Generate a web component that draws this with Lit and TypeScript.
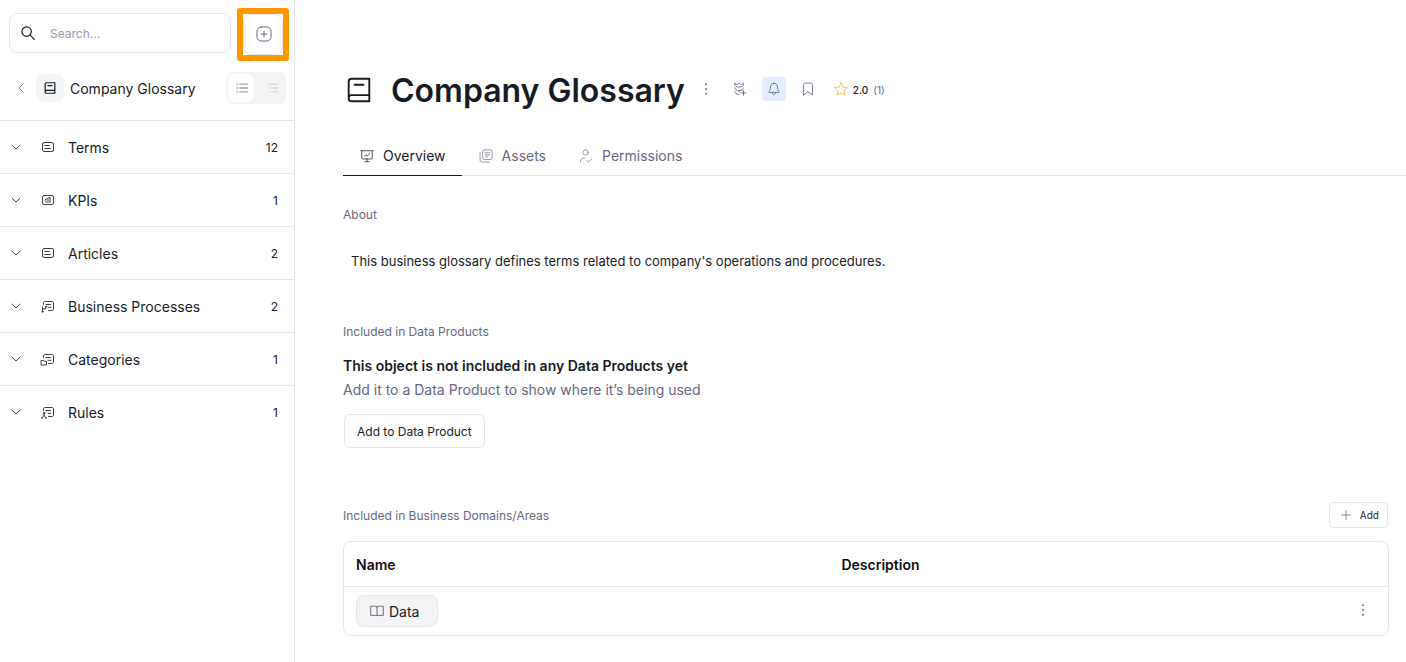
import { LitElement, html, css, svg, TemplateResult } from "lit";
import { customElement, property, state } from "lit/decorators.js";

const card = svg`<rect x="2.5" y="3.5" width="11" height="9" rx="1.5"/><path d="M4.8 6.5h4.4M4.8 9.500h5.600"/>`;
const linkedCard = svg`<path d="M3.500 6.500V5c0-1 .6-1.500 1.600-1.500h6.800c1 0 1.600.5 1.600 1.500v6c0 1-.6 1.500-1.600 1.500H8.500M6 6.500h4.500M8 9.300h2.800"/>`;

const icons: Record<string, TemplateResult> = {
  search: svg`<circle cx="6.600" cy="6.600" r="4.700"/><path d="M10.100 10.100l4.300 4.300"/>`,
  plusSquare: svg`<rect x="1" y="1" width="14" height="14" rx="4.200"/><path d="M8 5.200v5.600M5.200 8h5.600"/>`,
  plus: svg`<path d="M8 2v12M2 8h12"/>`,
  back: svg`<path d="M10 4L6 8l4 4"/>`,
  down: svg`<path d="M4 6.200L8 10l4-3.800"/>`,
  book: svg`<path d="M4 2h9.500v12H4c-.9 0-1.500-.6-1.500-1.500v-9C2.500 2.600 3.100 2 4 2zM2.500 12.200c0-.9.6-1.500 1.500-1.500h9.500M5.600 5.200h4.800"/>`,
  list: svg`<path d="M5.500 3.500h9M5.500 8h9M5.500 12.500h9M2 3.500h1M2 8h1M2 12.500h1"/>`,
  tree: svg`<path d="M5.500 3.500h9M9 8h5.500M9 12.500h5.500M2.500 3.500h.5M6 8h.5M6 12.500h.5"/>`,
  card,
  chart: svg`<rect x="2.500" y="3.500" width="11" height="9" rx="1.500"/><path d="M6 10.500V9M8 10.500V7.500M10 10.500V6M5 8L9.800 5.300"/>`,
  process: svg`${linkedCard}<path d="M2.500 9v4.500M2.500 10.800h3.300V8.600"/><circle cx="2.500" cy="13.700" r=".6"/><circle cx="5.900" cy="8.600" r=".6"/>`,
  category: svg`${linkedCard}<path d="M1.500 9.500h2l.7.800h2.300v3.700h-5z"/>`,
  rule: svg`${linkedCard}<circle cx="4" cy="9.200" r=".8"/><path d="M4 10v1.600M4 11.500L2 13.700M4 11.500l2 2.200M1.300 14h1.400M5.300 14h1.400"/>`,
  board: svg`<path d="M1 2h14M2 2v8.500c0 .6.300.900.900.900h10.200c.6 0 .9-.3.900-.9V2M8 11.400v3M5.500 14.500h5M5 8.300l1.800-1.800 1.400 1.400L11 5.200"/>`,
  copies: svg`<rect x="4.200" y="1" width="10.800" height="11" rx="2"/><path d="M1.200 4v8.500c0 1.500.8 2.500 2.300 2.500h8.500M7 4.200h5M7 6.600h5M7 9h3"/>`,
  person: svg`<circle cx="7.500" cy="4" r="3"/><path d="M1.500 15c0-3 1.800-4.800 4.900-4.800M8.800 13l2 2 3.800-3.600"/>`,
  dots: svg`<g fill="currentColor" stroke="none"><circle cx="8" cy="2.500" r="1.100"/><circle cx="8" cy="8" r="1.100"/><circle cx="8" cy="13.500" r="1.100"/></g>`,
  lineage: svg`<path d="M2 1.500L4.500 3 7 1.500 9.500 3 12 1.500V3c0 1.800-1.800 2.700-5 2.700S2 4.800 2 3zM2 6.800c.2 1.800 1.800 3 5 3s4.800-1.200 5-3M2 10.800c.2 2 1.800 3.400 5 3.600M7 9.800v1.700M12 9.800v5.400M9.300 12.500h5.400"/>`,
  bell: svg`<path d="M8 1.500C5.500 1.500 4 3.300 4 5.700c0 2.600-.6 3.900-1.800 5.300-.4.500-.2.900.4.900h10.800c.6 0 .8-.4.400-.9C12.600 9.600 12 8.300 12 5.700c0-2.400-1.500-4.200-4-4.200zM6.200 12.200c0 1.300.7 2.300 1.800 2.300s1.800-1 1.800-2.300"/>`,
  bookmark: svg`<path d="M2.800 14.800V3.500c0-1.500.8-2.300 2.300-2.300h5.800c1.500 0 2.300.8 2.300 2.300v11.300L8 11.300z"/>`,
  star: svg`<path d="M8 .9l2.200 4.800 5.200.6-3.900 3.500 1.100 5.200L8 12.400 3.400 15l1.100-5.200L.6 6.300l5.200-.6z"/>`,
  openBook: svg`<path d="M8 3.300C7.500 2.800 7 2.500 6.200 2.500H.8v10.500h5.400c.8 0 1.400.2 1.800.6.400-.4 1-.6 1.800-.6h5.400V2.500H9.800C9 2.500 8.500 2.800 8 3.300zM8 3.300v10"/>`,
};

@customElement("ui-icon")
class UiIcon extends LitElement {
  @property() name = "";

  static styles = css`
    :host {
      display: inline-flex;
      flex: none;
      width: 16px;
      height: 16px;
    }
    svg {
      width: 100%;
      height: 100%;
      fill: none;
      stroke: currentColor;
      stroke-width: var(--stroke, 1);
      stroke-linejoin: round;
      stroke-linecap: round;
    }
  `;

  render() {
    return html`<svg viewBox="0 0 16 16" aria-hidden="true">${icons[this.name]}</svg>`;
  }
}

const groups = [
  { label: "Terms", icon: "card", count: 12 },
  { label: "KPIs", icon: "chart", count: 1 },
  { label: "Articles", icon: "card", count: 2 },
  { label: "Business Processes", icon: "process", count: 2 },
  { label: "Categories", icon: "category", count: 1 },
  { label: "Rules", icon: "rule", count: 1 },
];

const tabs = [
  { label: "Overview", icon: "board" },
  { label: "Assets", icon: "copies" },
  { label: "Permissions", icon: "person" },
];

@customElement("app-root")
class AppRoot extends LitElement {
  @state() private tab = "Overview";

  static styles = css`
    :host {
      display: flex;
      min-height: 100vh;
      background: #fff;
      color: #181b25;
      font: 14px/20px Inter, sans-serif;
    }
    * {
      box-sizing: border-box;
    }
    button,
    input {
      font: inherit;
      color: inherit;
      background: none;
      border: 0;
      padding: 0;
      margin: 0;
    }
    button {
      display: inline-flex;
      align-items: center;
      cursor: pointer;
    }
    h1,
    h2,
    h3,
    p {
      margin: 0;
    }
    .sidebar {
      flex: none;
      width: 295px;
      border-right: 1px solid #e6e7e9;
    }
    .tools {
      display: flex;
      align-items: flex-start;
      gap: 6px;
      padding: 8px 5px 0 9px;
    }
    .search {
      flex: 1;
      min-width: 0;
      display: flex;
      align-items: center;
      gap: 14px;
      height: 40px;
      margin-top: 5px;
      padding: 0 10px;
      border: 1px solid #e6e7e9;
      border-radius: 8px;
    }
    .search input {
      flex: 1;
      min-width: 0;
      padding-top: 2px;
      outline: none;
      font-size: 12px;
    }
    .search input::placeholder {
      color: #9b9ca8;
    }
    .search ui-icon {
      --stroke: 1.2;
    }
    .highlight {
      display: flex;
      border: 6px solid #ff9800;
      border-radius: 3px;
    }
    .create {
      justify-content: center;
      width: 40px;
      height: 41px;
      padding: 0 0 2px 2px;
      border: 1px solid #e6e7e9;
      border-radius: 8px;
      color: #69677f;
    }
    .heading {
      display: flex;
      align-items: center;
      padding: 11px 8px 16px 13px;
      border-bottom: 1px solid #e6e7e9;
    }
    .back {
      color: #8b8a9b;
    }
    .tile {
      display: flex;
      align-items: center;
      justify-content: center;
      width: 28px;
      height: 28px;
      margin: 0 6px 0 7px;
      border-radius: 8px;
      background: #f3f4f6;
      --stroke: 1.4;
    }
    .tile ui-icon {
      width: 14px;
      height: 14px;
    }
    .heading h2 {
      flex: 1;
      padding-top: 2px;
      font-size: 14px;
      font-weight: 400;
    }
    .toggle {
      display: flex;
      gap: 4px;
      padding: 2px;
      border-radius: 8px;
      background: #f3f4f6;
      color: #d3d4d8;
    }
    .toggle button {
      justify-content: center;
      width: 26px;
      height: 28px;
      padding-left: 2px;
      border-radius: 7px;
    }
    .toggle ui-icon {
      width: 14px;
      height: 14px;
      --stroke: 1.5;
    }
    .toggle .on {
      background: #fff;
      color: #a5a6ae;
    }
    .group {
      width: 100%;
      height: 53px;
      padding: 0 16px 0 8px;
      border-bottom: 1px solid #e6e7e9;
      text-align: left;
    }
    .group:last-child {
      border-bottom-color: transparent;
    }
    .group ui-icon {
      color: #3c3e4a;
    }
    .group .kind {
      margin: 0 12px 0 16px;
    }
    .group .label {
      flex: 1;
      padding-top: 2px;
    }
    .group .count {
      padding-top: 2px;
      font-size: 12px;
    }
    .main {
      flex: 1;
      min-width: 0;
      padding: 68px 0 24px 48px;
      color: #69677f;
    }
    .title {
      display: flex;
      align-items: center;
    }
    .title h1 {
      margin: 0 13px 0 16px;
      padding-top: 2px;
      color: #181b25;
      font-size: 32px;
      line-height: 42px;
      font-weight: 600;
    }
    .glyph {
      width: 32px;
      height: 32px;
      padding: 1px;
      color: #181b25;
    }
    .actions {
      display: flex;
      align-items: center;
      gap: 10px;
      padding-bottom: 2px;
    }
    .actions button {
      justify-content: center;
      width: 24px;
      height: 24px;
      border-radius: 4px;
    }
    .actions ui-icon {
      width: 14px;
      height: 14px;
    }
    .actions .more {
      width: 16px;
    }
    .actions .more + button {
      margin-left: 4px;
    }
    .actions .on {
      background: #e1eefe;
    }
    .actions .rating {
      width: auto;
      gap: 5px;
      margin-left: 4px;
      font-size: 10px;
    }
    .rating ui-icon {
      color: #f6bd42;
    }
    .rating strong,
    .rating span {
      padding-top: 2px;
    }
    .rating strong {
      color: #181b25;
      font-weight: 500;
    }
    .tabs {
      display: flex;
      margin-top: 24px;
      border-bottom: 1px solid #e6e7e9;
    }
    .tabs button {
      gap: 9px;
      height: 40px;
      margin-bottom: -1px;
      padding: 0 16px 0 17px;
      border-bottom: 1px solid transparent;
    }
    .tabs ui-icon {
      width: 14px;
      height: 14px;
      color: #8b8a9b;
    }
    .tabs .on {
      color: #181b25;
      border-bottom-color: #181b25;
    }
    .tabs .on ui-icon {
      color: #3c3e4a;
    }
    .content {
      padding: 29px 17px 0 0;
    }
    .content h2 {
      font-size: 12px;
      font-weight: 400;
    }
    .about {
      padding: 26px 8px 51px;
      color: #181b25;
      font-size: 13px;
    }
    .content h3 {
      margin-top: 12px;
      color: #181b25;
      font-size: 14px;
      line-height: 24px;
      font-weight: 600;
    }
    .hint {
      line-height: 24px;
    }
    .outline {
      border: 1px solid #e6e7e9;
      border-radius: 6px;
      color: #181b25;
    }
    .to-product {
      height: 34px;
      margin: 12px 0 54px 1px;
      padding: 2px 12px 0;
      font-size: 12px;
    }
    .bar {
      display: flex;
      align-items: center;
      justify-content: space-between;
      padding-right: 1px;
    }
    .bar h2 {
      padding-top: 2px;
    }
    .add {
      gap: 8px;
      height: 26px;
      padding: 0 8px 0 10px;
      border-radius: 4px;
      font-size: 10px;
    }
    .add ui-icon {
      width: 12px;
      height: 12px;
      color: #69677f;
    }
    .frame {
      margin-top: 13px;
      border: 1px solid #e6e7e9;
      border-radius: 8px;
    }
    table {
      width: 100%;
      border-collapse: collapse;
      table-layout: fixed;
    }
    th {
      height: 44px;
      padding: 2px 12px 0;
      color: #0f1014;
      text-align: left;
      font-weight: 600;
    }
    .name-col {
      width: 46.5%;
    }
    .menu-col {
      width: 52px;
    }
    td {
      height: 49px;
      padding: 0 12px;
      border-top: 1px solid #e6e7e9;
    }
    .chip {
      display: inline-flex;
      align-items: center;
      gap: 5px;
      height: 32px;
      padding: 0 18px 0 13px;
      border: 1px solid #e6e7e9;
      border-radius: 8px;
      background: #f3f4f6;
      color: #181b25;
      text-decoration: none;
      vertical-align: middle;
    }
    .chip ui-icon,
    td button ui-icon {
      width: 14px;
      height: 14px;
    }
    .chip ui-icon {
      color: #5b5d68;
    }
    .chip span {
      padding-top: 2px;
    }
    td button {
      vertical-align: middle;
      padding: 0 8px 4px;
    }
  `;

  render() {
    return html`
      <aside class="sidebar">
        <div class="tools">
          <label class="search">
            <ui-icon name="search"></ui-icon>
            <input type="text" placeholder="Search..." aria-label="Search" />
          </label>
          <div class="highlight">
            <button class="create" aria-label="Create"><ui-icon name="plusSquare"></ui-icon></button>
          </div>
        </div>
        <div class="heading">
          <button class="back" aria-label="Back"><ui-icon name="back"></ui-icon></button>
          <span class="tile"><ui-icon name="book"></ui-icon></span>
          <h2>Company Glossary</h2>
          <div class="toggle">
            <button class="on" aria-label="List view"><ui-icon name="list"></ui-icon></button>
            <button aria-label="Tree view"><ui-icon name="tree"></ui-icon></button>
          </div>
        </div>
        <nav>
          ${groups.map(
            (g) => html`<button class="group">
              <ui-icon name="down"></ui-icon>
              <ui-icon class="kind" name=${g.icon}></ui-icon>
              <span class="label">${g.label}</span>
              <span class="count">${g.count}</span>
            </button>`
          )}
        </nav>
      </aside>
      <main class="main">
        <header class="title">
          <ui-icon class="glyph" name="book"></ui-icon>
          <h1>Company Glossary</h1>
          <div class="actions">
            <button class="more" aria-label="More"><ui-icon name="dots"></ui-icon></button>
            <button aria-label="Add lineage"><ui-icon name="lineage"></ui-icon></button>
            <button class="on" aria-label="Notifications"><ui-icon name="bell"></ui-icon></button>
            <button aria-label="Bookmark"><ui-icon name="bookmark"></ui-icon></button>
            <button class="rating">
              <ui-icon name="star"></ui-icon><strong>2.0</strong><span>(1)</span>
            </button>
          </div>
        </header>
        <div class="tabs" role="tablist">
          ${tabs.map(
            (t) => html`<button
              role="tab"
              class=${t.label === this.tab ? "on" : ""}
              aria-selected=${t.label === this.tab}
              @click=${() => (this.tab = t.label)}
            >
              <ui-icon name=${t.icon}></ui-icon>${t.label}
            </button>`
          )}
        </div>
        <div class="content">
          <h2>About</h2>
          <p class="about">This business glossary defines terms related to company's operations and procedures.</p>
          <h2>Included in Data Products</h2>
          <h3>This object is not included in any Data Products yet</h3>
          <p class="hint">Add it to a Data Product to show where it’s being used</p>
          <button class="outline to-product">Add to Data Product</button>
          <div class="bar">
            <h2>Included in Business Domains/Areas</h2>
            <button class="outline add"><ui-icon name="plus"></ui-icon>Add</button>
          </div>
          <div class="frame">
            <table>
              <thead>
                <tr>
                  <th class="name-col">Name</th>
                  <th>Description</th>
                  <th class="menu-col"></th>
                </tr>
              </thead>
              <tbody>
                <tr>
                  <td><a class="chip" href="#data"><ui-icon name="openBook"></ui-icon><span>Data</span></a></td>
                  <td></td>
                  <td><button aria-label="Row menu"><ui-icon name="dots"></ui-icon></button></td>
                </tr>
              </tbody>
            </table>
          </div>
        </div>
      </main>
    `;
  }
}
